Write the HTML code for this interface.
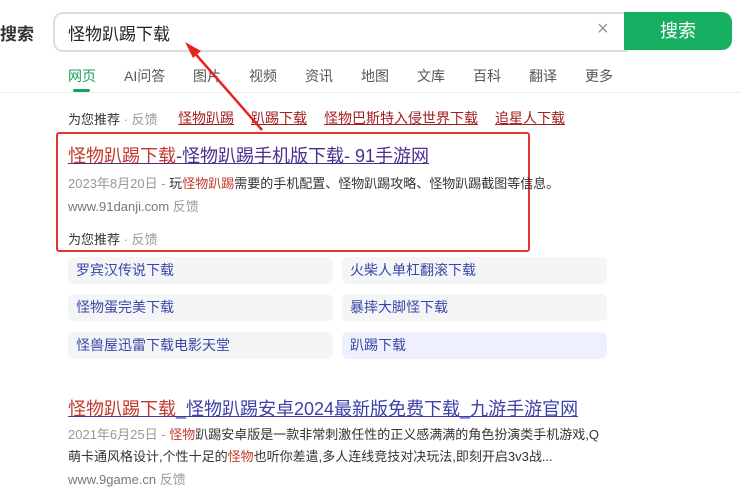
<!DOCTYPE html>
<html><head><meta charset="utf-8"><style>
body{margin:0;width:741px;height:501px;background:#fff;font-family:"Liberation Sans","Noto Sans CJK SC",sans-serif;position:relative;overflow:hidden}
.a{position:absolute;white-space:nowrap}
.tab{position:absolute;top:66px;font-size:14px;color:#555}
.rec{color:#a41d1d;text-decoration:underline;font-size:14px;position:absolute;top:108px}
.chip{position:absolute;width:265px;height:27px;background:#f4f5f7;border-radius:6px;color:#3b46a8;font-size:14px;line-height:27px;padding-left:8px;box-sizing:border-box}
.g{color:#999}.r{color:#c0392b}
</style></head><body>
<div class="a" style="left:0;top:20px;font-size:17px;font-weight:bold;color:#333">搜索</div>
<div class="a" style="left:53px;top:12px;width:573px;height:36px;border:2px solid #ddd;border-right:none;border-radius:10px 0 0 10px"></div>
<div class="a" style="left:68px;top:20px;font-size:17px;color:#222">怪物趴踢下载</div>
<div class="a" style="left:597px;top:18px;font-size:20px;color:#999">×</div>
<div class="a" style="left:624px;top:12px;width:108px;height:38px;background:#17b062;border-radius:0 10px 10px 0;color:#fff;font-size:18px;text-align:center;line-height:38px">搜索</div>
<div class="tab" style="left:68px;color:#17a35a">网页</div>
<div class="a" style="left:73px;top:89px;width:17px;height:3px;background:#17a35a;border-radius:2px"></div>
<div class="tab" style="left:124px">AI问答</div>
<div class="tab" style="left:193px">图片</div>
<div class="tab" style="left:249px">视频</div>
<div class="tab" style="left:305px">资讯</div>
<div class="tab" style="left:361px">地图</div>
<div class="tab" style="left:417px">文库</div>
<div class="tab" style="left:473px">百科</div>
<div class="tab" style="left:529px">翻译</div>
<div class="tab" style="left:585px">更多</div>
<div class="a" style="left:0;top:92px;width:741px;height:1px;background:#eee"></div>
<div class="a" style="left:68px;top:109px;font-size:13px;color:#333">为您推荐 <span class="g">· 反馈</span></div>
<span class="rec" style="left:178px">怪物趴踢</span>
<span class="rec" style="left:251px">趴踢下载</span>
<span class="rec" style="left:324px">怪物巴斯特入侵世界下载</span>
<span class="rec" style="left:495px">追星人下载</span>
<div class="a" style="left:56px;top:132px;width:470px;height:116px;border:2px solid #e53333;border-radius:3px"></div>
<div class="a" style="left:68px;top:142px;font-size:18px;color:#4b2f8f;text-decoration:underline"><span class="r">怪物趴踢下载</span>-怪物趴踢手机版下载- 91手游网</div>
<div class="a" style="left:68px;top:173px;font-size:13px;color:#333"><span class="g">2023年8月20日 -</span> 玩<span class="r">怪物趴踢</span>需要的手机配置、怪物趴踢攻略、怪物趴踢截图等信息。</div>
<div class="a" style="left:68px;top:196px;font-size:13px;color:#777">www.91danji.com <span class="g">反馈</span></div>
<div class="a" style="left:68px;top:229px;font-size:13px;color:#333">为您推荐 <span class="g">· 反馈</span></div>
<div class="chip" style="left:68px;top:257px">罗宾汉传说下载</div>
<div class="chip" style="left:342px;top:257px">火柴人单杠翻滚下载</div>
<div class="chip" style="left:68px;top:294px">怪物蛋完美下载</div>
<div class="chip" style="left:342px;top:294px">暴摔大脚怪下载</div>
<div class="chip" style="left:68px;top:332px">怪兽屋迅雷下载电影天堂</div>
<div class="chip" style="left:342px;top:332px;background:#eef1fd">趴踢下载</div>
<div class="a" style="left:68px;top:395px;font-size:18px;color:#3b3fa8;text-decoration:underline"><span class="r">怪物趴踢下载</span>_怪物趴踢安卓2024最新版免费下载_九游手游官网</div>
<div class="a" style="left:68px;top:424px;font-size:13px;color:#333;line-height:22px"><span class="g">2021年6月25日 -</span> <span class="r">怪物</span>趴踢安卓版是一款非常刺激任性的正义感满满的角色扮演类手机游戏,Q<br>萌卡通风格设计,个性十足的<span class="r">怪物</span>也听你差遣,多人连线竞技对决玩法,即刻开启3v3战...</div>
<div class="a" style="left:68px;top:469px;font-size:13px;color:#777">www.9game.cn <span class="g">反馈</span></div>
<svg class="a" style="left:0;top:0" width="741" height="501"><line x1="262" y1="130" x2="192" y2="50" stroke="#e8231f" stroke-width="2.5"/><polygon points="185,42 201,51 193,58" fill="#e8231f"/></svg>
</body></html>
